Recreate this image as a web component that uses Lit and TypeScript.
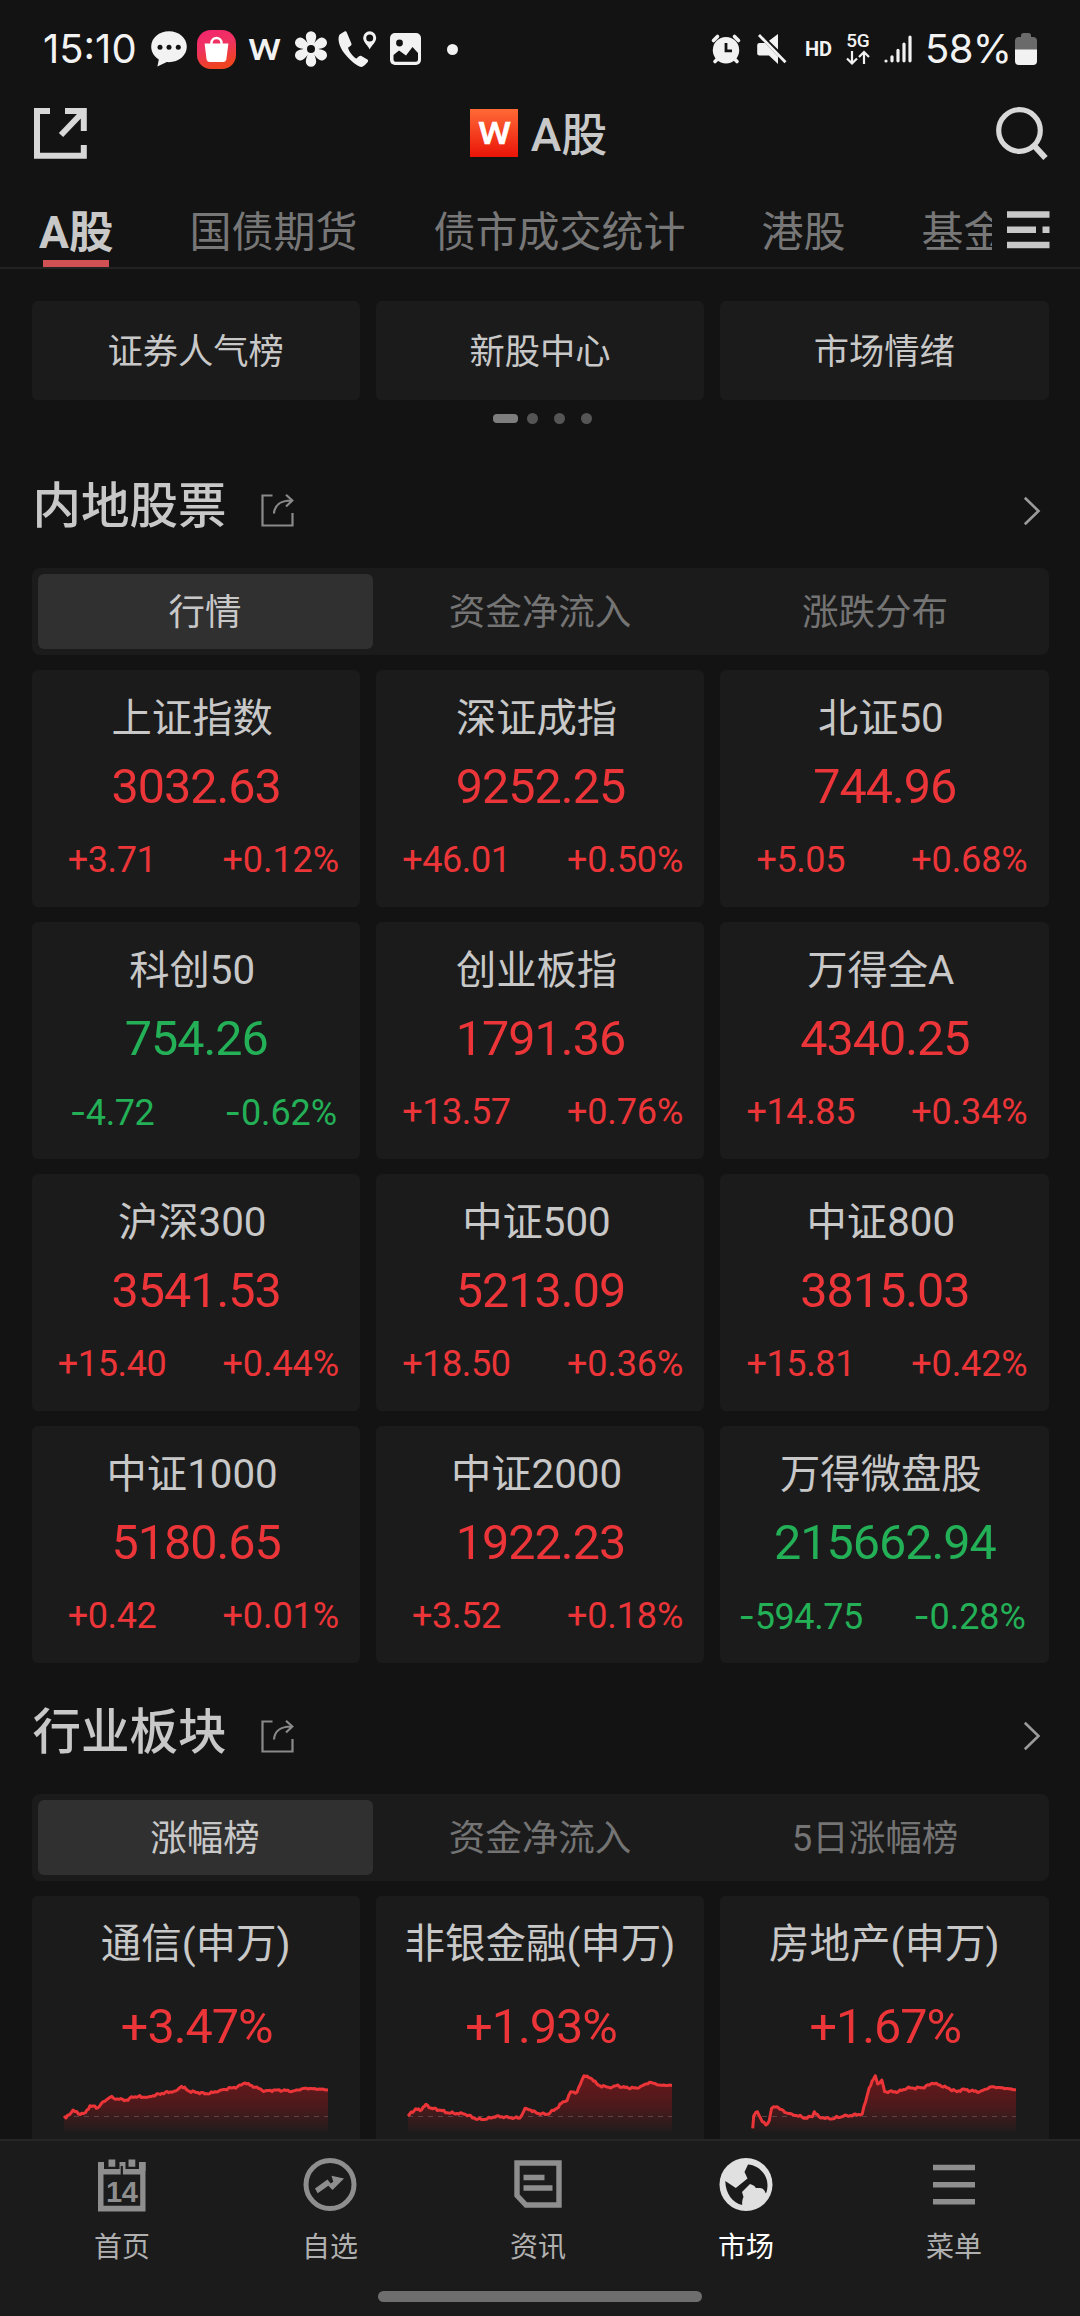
import { LitElement, html, svg, css } from "lit";
import { customElement, property } from "lit/decorators.js";
import { classMap } from "lit/directives/class-map.js";

type Quote = { name: string; price: string; diff: string; pct: string };
type Point = [number, number];
type Sector = { name: string; pct: string; points: Point[] };

const QUOTES: Quote[] = [
  { name: "上证指数", price: "3032.63", diff: "+3.71", pct: "+0.12%" },
  { name: "深证成指", price: "9252.25", diff: "+46.01", pct: "+0.50%" },
  { name: "北证50", price: "744.96", diff: "+5.05", pct: "+0.68%" },
  { name: "科创50", price: "754.26", diff: "-4.72", pct: "-0.62%" },
  { name: "创业板指", price: "1791.36", diff: "+13.57", pct: "+0.76%" },
  { name: "万得全A", price: "4340.25", diff: "+14.85", pct: "+0.34%" },
  { name: "沪深300", price: "3541.53", diff: "+15.40", pct: "+0.44%" },
  { name: "中证500", price: "5213.09", diff: "+18.50", pct: "+0.36%" },
  { name: "中证800", price: "3815.03", diff: "+15.81", pct: "+0.42%" },
  { name: "中证1000", price: "5180.65", diff: "+0.42", pct: "+0.01%" },
  { name: "中证2000", price: "1922.23", diff: "+3.52", pct: "+0.18%" },
  { name: "万得微盘股", price: "215662.94", diff: "-594.75", pct: "-0.28%" },
];

const SECTORS: Sector[] = [
  {
    name: "通信(申万)",
    pct: "+3.47%",
    points: [
      [0, 44], [2, 46], [9, 38], [14.5, 42], [21.4, 40.7], [26, 33.7], [34, 35.7], [39, 29.7],
      [46, 25.3], [55, 27.3], [64, 28.3], [67.5, 24.7], [84, 25], [98, 21.3], [111.6, 19],
      [117.5, 14.3], [125.4, 19.3], [144, 22], [156, 18.3], [173.6, 14.7], [181, 11], [191, 15.3],
      [201, 19], [211.5, 18], [229, 19], [241, 16.3], [264, 17.7],
    ],
  },
  {
    name: "非银金融(申万)",
    pct: "+1.93%",
    points: [
      [0, 44], [7.7, 36.7], [12, 38.7], [18, 32.3], [22.7, 36], [32.7, 38.3], [39, 40.7], [56, 42],
      [66, 45.7], [68, 47.3], [79, 47], [88.7, 44], [101, 45.7], [112, 46], [117, 36.3],
      [122.7, 38], [129, 41.3], [139, 42.3], [149, 36.3], [155, 29.7], [159, 28.7], [162.7, 19.7],
      [169, 20.3], [172, 13], [176, 3.7], [184, 7], [190, 13], [202.7, 16], [210, 13],
      [214, 15.3], [229, 16.3], [241.7, 10.3], [252.7, 13.3], [264, 13.3],
    ],
  },
  {
    name: "房地产(申万)",
    pct: "+1.67%",
    points: [
      [0.7, 56.3], [1.7, 44], [5.5, 39.7], [10.3, 49.7], [13.8, 53], [17.2, 48.7], [19.6, 36.3],
      [25, 34.7], [32.7, 40.3], [39.6, 42], [53.4, 46], [60.3, 44.7], [62.3, 39.7], [67, 44.7],
      [77.5, 47], [91.3, 44.3], [110.2, 42], [113.6, 29.7], [117, 16.3], [123.3, 3.7],
      [125.7, 12], [129.8, 8], [132.6, 19.7], [146.3, 19.7], [155, 16.3], [170.5, 15.7],
      [180.8, 11.3], [187.7, 13], [205, 19.7], [210, 17.3], [227.3, 20], [239.3, 14.7], [264, 17.7],
    ],
  },
];

/* Subdivides the trend and adds the small tick-to-tick wobble of intraday data. */
function intraday(points: Point[]): Point[] {
  const out: Point[] = [];
  let k = 0;
  for (let i = 0; i < points.length - 1; i++) {
    const [x0, y0] = points[i];
    const [x1, y1] = points[i + 1];
    const steps = Math.max(1, Math.round((x1 - x0) / 1.7));
    for (let s = 0; s < steps; s++) {
      const t = s / steps;
      const fade = x0 > 215 ? 0.4 : 1;
      const wobble = s === 0 ? 0 : (Math.sin(k * 2.4) + Math.sin(k * 5.1)) * 0.65 * fade;
      out.push([x0 + (x1 - x0) * t, y0 + (y1 - y0) * t + wobble]);
      k++;
    }
  }
  out.push(points[points.length - 1]);
  return out;
}

const FONT = css`
  font-family: Roboto, "Noto Sans CJK SC", sans-serif;
`;

@customElement("status-bar")
class StatusBar extends LitElement {
  static styles = css`
    :host {
      display: flex;
      justify-content: space-between;
      height: 90px;
      padding: 28px 43px 20px 43px;
      box-sizing: border-box;
      color: #f2f2f2;
    }
    .side { display: flex; align-items: center; height: 42px; }
    .clock, .battery-text { font: 400 40px/42px Inter, sans-serif; }
    .clock { width: 95px; letter-spacing: 0; margin-right: 13px; white-space: nowrap; }
    .battery-text { width: 90px; letter-spacing: -0.6px; margin-left: 13px; white-space: nowrap; }
    svg { display: block; flex: none; overflow: visible; }
    .bag { margin-left: 10px; }
    .wind { margin-left: 12px; }
    .flower { margin-left: 13px; }
    .call { margin-left: 10px; }
    .photo { margin-left: 13px; }
    .more { margin-left: 26px; }
    .mute { margin-left: 16px; }
    .hd { font: 700 20px/24px Roboto, sans-serif; margin-left: 18px; width: 27px; }
    .net { margin-left: 14px; }
    .bars { margin-left: 14px; }
  `;
  render() {
    return html`
      <div class="side">
        <span class="clock">15:10</span>
        <svg width="36" height="36" viewBox="0 0 36 36">
          <path fill="#f2f2f2" d="M18 .3C8 .3.2 7 .2 15.6c0 5.6 3 10 7.6 12.8L6.4 35.6l9.4-4.5c11 1 20-6 20-15.5C35.800 7 28 .3 18 .3Z"/>
          <g fill="#131313"><circle cx="9" cy="16.300" r="2.500"/><circle cx="18" cy="16.300" r="2.500"/><circle cx="27.300" cy="16.300" r="2.500"/></g>
        </svg>
        <svg class="bag" width="39" height="39" viewBox="0 0 39 39">
          <defs><linearGradient id="bag" x1="0" y1="0" x2=".3" y2="1"><stop offset="0" stop-color="#f5246f"/><stop offset=".5" stop-color="#ee3360"/><stop offset="1" stop-color="#f04321"/></linearGradient></defs>
          <rect width="39" height="39" rx="14" fill="url(#bag)"/>
          <path d="M14.500 15v-2a5 5 0 0 1 10 0v2" fill="none" stroke="#fff" stroke-width="2.400"/>
          <path d="M7.600 13.600h23.800l-2 15.400a3.500 3.500 0 0 1-3.500 3H13a3.500 3.500 0 0 1-3.500-3Z" fill="#fff"/>
        </svg>
        <svg class="wind" width="33" height="24" viewBox="0 0 33 24">
          <text x="0" y="23" font-family="Roboto" font-weight="500" font-size="30" fill="#f2f2f2" textLength="33" lengthAdjust="spacingAndGlyphs">W</text>
        </svg>
        <svg class="flower" width="34" height="36" viewBox="-17 -18 34 36">
          ${[0, 60, 120, 180, 240, 300].map(
            (a) => svg`<path transform="rotate(${a})" fill="#f2f2f2" d="M-2.500-2C-3-6-5.200-9-5.200-12.500a5.200 5.200 0 0 1 10.400 0C5.200-9 3-6 2.500-2Z"/>`,
          )}
          <circle r="4.800" fill="#f2f2f2"/><circle r="4" fill="#131313"/>
        </svg>
        <svg class="call" width="39" height="36" viewBox="0 0 39 36">
          <path fill="#f2f2f2" d="M6.500.4 2 3.200C-1 6 .6 15 6.500 22.500 12.500 30 20 35.500 23 36c2 .2 5-2.600 6.800-5.200.6-1 .4-1.800-.4-2.400l-6-3.400c-.9-.5-1.700-.3-2.400.3l-2.600 2.300c-3.200-1.500-7.400-7-8.400-10.900l2.700-2c.8-.6 1-1.400.7-2.300L8.800 1.400C8.400.300 7.500-.2 6.500.4Z"/>
          <path fill="#f2f2f2" fill-rule="evenodd" d="M31.700.3a6.500 6.500 0 0 1 6.500 6.500c0 4.500-5 8-6.500 11.700C30.200 14.800 25.200 11.300 25.200 6.800A6.500 6.500 0 0 1 31.700.3Zm0 3.200a3.500 3.500 0 1 0 0 7 3.500 3.500 0 0 0 0-7Z"/>
        </svg>
        <svg class="photo" width="31" height="32" viewBox="0 0 31 32">
          <rect width="31" height="32" rx="5" fill="#f2f2f2"/>
          <circle cx="9.500" cy="10" r="3.400" fill="#131313"/>
          <path fill="#131313" d="m3.500 22 5.500-4.500 7 5L22.500 14l5.500 6v6.500a2.200 2.200 0 0 1-2.200 2.200H5.700a2.200 2.200 0 0 1-2.200-2.200Z"/>
        </svg>
        <svg class="more" width="11" height="11" viewBox="0 0 11 11"><circle cx="5.500" cy="5.500" r="5.500" fill="#f2f2f2"/></svg>
      </div>
      <div class="side">
        <svg width="30" height="30" viewBox="0 0 30 30">
          <g stroke="#f2f2f2" stroke-width="3.600" stroke-linecap="round"><path d="m2.500 6.500 4-4M27.500 6.500l-4-4"/><path d="m4 27.500 3-3M26 27.500l-3-3"/></g>
          <circle cx="15" cy="16.200" r="13.200" fill="#f2f2f2"/>
          <path d="M15 9v7.800h6" fill="none" stroke="#131313" stroke-width="2.800"/>
        </svg>
        <svg class="mute" width="30" height="30" viewBox="0 0 30 30">
          <path fill="#f2f2f2" d="M2.500 9H8l13 13.500V30l-9-8.500H2.500A2.300 2.300 0 0 1 .2 19v-7.700A2.300 2.300 0 0 1 2.500 9ZM21 0v15.500L12 6.800Z"/>
          <path d="M2 1 28.500 28.200" stroke="#f2f2f2" stroke-width="2.800"/>
        </svg>
        <span class="hd">HD</span>
        <svg class="net" width="24" height="34" viewBox="0 0 24 34">
          <text x="0.300" y="15" font-family="Roboto" font-weight="500" font-size="19" fill="#f2f2f2" textLength="23.500">5G</text>
          <path d="M6 19v12M1 26.500l5 5 5-5M18 32V20M13 25l5-5 5 5" fill="none" stroke="#f2f2f2" stroke-width="2.200"/>
        </svg>
        <svg class="bars" width="28" height="28" viewBox="0 0 28 28">
          <g stroke="#f2f2f2" stroke-width="3.200" stroke-linecap="round"><path d="M2 26h.010M8 25.800v-4M14 25.800v-10.500M20 25.800V9M26 25.800V2"/></g>
        </svg>
        <span class="battery-text">58%</span>
        <svg width="22" height="32" viewBox="0 0 22 32">
          <path fill="#6a6a6a" d="M6 2.500A2.500 2.500 0 0 1 8.500 0h5A2.500 2.500 0 0 1 16 2.500V4h2a4 4 0 0 1 4 4v9H0V8a4 4 0 0 1 4-4h2Z"/>
          <path fill="#f2f2f2" d="M0 16.500h22V28a4 4 0 0 1-4 4H4a4 4 0 0 1-4-4Z"/>
        </svg>
      </div>
    `;
  }
}

@customElement("market-header")
class MarketHeader extends LitElement {
  static styles = css`
    :host {
      display: block;
      height: 179px;
      border-bottom: 2px solid #232323;
      box-sizing: border-box;
      color: #c8c8c8;
      ${FONT}
    }
    .bar { display: flex; align-items: center; height: 88px; padding: 0 32px 2px 34px; box-sizing: border-box; justify-content: space-between; }
    .brand { display: flex; align-items: center; gap: 13px; margin-right: 6px; font: 500 46px/60px Roboto, "Noto Sans CJK SC", sans-serif; }
    .brand span { padding-top: 3px; }
    svg { display: block; flex: none; }
    .tabs { display: flex; height: 89px; padding-left: 39px; padding-right: 30px; }
    .list { display: flex; gap: 76px; width: 954px; overflow: hidden; }
    .tab { flex: none; font-size: 42px; line-height: 60px; padding-top: 25px; color: #777; white-space: nowrap; display: flex; flex-direction: column; align-items: center; }
    .tab.on { color: #c8c8c8; font-weight: 700; font-size: 44.5px; }
    .tab.on::after { content: ""; width: 66px; height: 7px; margin-top: -3px; background: #d05054; }
    .menu { margin: 33px 0 0 15px; }
  `;
  render() {
    const tabs = ["A股", "国债期货", "债市成交统计", "港股", "基金"];
    return html`
      <div class="bar">
        <svg width="53" height="51" viewBox="0 0 53 51">
          <path d="M16 3H3v44.800h46.800V37" fill="none" stroke="#d8d8d8" stroke-width="6"/>
          <path d="M31 3h18.800v20M48 5 27 27" fill="none" stroke="#d8d8d8" stroke-width="6"/>
        </svg>
        <div class="brand">
          <svg width="48" height="48" viewBox="0 0 48 48">
            <defs><linearGradient id="logo" x1="0" y1="0" x2="0" y2="1"><stop offset="0" stop-color="#ff6a36"/><stop offset="1" stop-color="#ea1408"/></linearGradient></defs>
            <rect width="48" height="48" fill="url(#logo)"/>
            <text x="8" y="34.500" font-family="Roboto" font-weight="500" font-size="30.500" stroke="#fff" stroke-width=".5" fill="#fff" textLength="33" lengthAdjust="spacingAndGlyphs">W</text>
          </svg>
          <span>A股</span>
        </div>
        <svg width="52" height="53" viewBox="0 0 52 53">
          <circle cx="23.500" cy="23.500" r="20.800" fill="none" stroke="#d8d8d8" stroke-width="5.200"/>
          <path d="m37.500 38 12 13" stroke="#d8d8d8" stroke-width="6"/>
        </svg>
      </div>
      <div class="tabs">
        <div class="list">
          ${tabs.map((t, i) => html`<div class=${classMap({ tab: true, on: i === 0 })}>${t}</div>`)}
        </div>
        <svg class="menu" width="43" height="38" viewBox="0 0 43 38">
          <path d="M0 3.500h42.500M0 18.800h29M35.500 18.800h7M0 34h42.500" stroke="#c8c8c8" stroke-width="6.600"/>
        </svg>
      </div>
    `;
  }
}

@customElement("section-title")
class SectionTitle extends LitElement {
  @property() label = "";
  static styles = css`
    :host { display: flex; align-items: center; height: 64px; padding: 0 9px 0 1px; ${FONT} }
    .label { width: 228px; font-size: 48.5px; line-height: 64px; padding-top: 4px; font-weight: 500; color: #c8c8c8; white-space: nowrap; }
    svg { display: block; overflow: visible; margin-top: 11px; }
    .go { margin-left: auto; }
  `;
  render() {
    return html`
      <span class="label">${this.label}</span>
      <svg width="33" height="33" viewBox="0 0 33 33" fill="none" stroke="#8a8a8a" stroke-width="2.200">
        <path d="M11.500 1.500h-10v30h30V19"/>
        <path d="M13 19.500C13.500 11 20 6.500 30 6.500M25 .8l6.300 5.700L25 12.500"/>
      </svg>
      <svg class="go" width="16" height="28" viewBox="0 0 16 28" fill="none" stroke="#9a9a9a" stroke-width="2.600"><path d="M.8.8 14.500 14 .8 27.200"/></svg>
    `;
  }
}

@customElement("segment-bar")
class SegmentBar extends LitElement {
  @property({ attribute: false }) items: string[] = [];
  static styles = css`
    :host { display: grid; grid-template-columns: repeat(3, 1fr); height: 87px; padding: 6px; box-sizing: border-box; border-radius: 8px; background: #1b1b1b; ${FONT} }
    .seg { display: flex; align-items: center; justify-content: center; padding-top: 3px; font-size: 36.5px; line-height: 50px; color: #747474; border-radius: 6px; }
    .seg.on { color: #c8c8c8; background: #303030; }
  `;
  render() {
    return this.items.map((t, i) => html`<div class=${classMap({ seg: true, on: i === 0 })}>${t}</div>`);
  }
}

@customElement("quote-card")
class QuoteCard extends LitElement {
  @property({ attribute: false }) quote!: Quote;
  static styles = css`
    :host { display: block; height: 236.500px; padding-top: 25px; box-sizing: border-box; border-radius: 6px; background: #1b1b1b; text-align: center; white-space: nowrap; ${FONT} }
    .name { font-size: 40.300px; line-height: 48px; color: #c8c8c8; padding-right: 7px; }
    .price { font-size: 48.500px; line-height: 56px; margin-top: 16px; letter-spacing: -1px; padding-left: 1px; }
    .row { display: grid; grid-template-columns: 1fr 1fr; gap: 12px; margin-top: 25px; font-size: 36px; line-height: 40px; letter-spacing: -0.1px; }
    .diff { padding-left: 3px; letter-spacing: -0.4px; }
    .minus { font-family: Inter, sans-serif; }
    .up { color: #ec3538; }
    .down { color: #23b057; }
  `;
  private signed(s: string) {
    return s.startsWith("-") ? html`<span class="minus">-</span>${s.slice(1)}` : s;
  }
  render() {
    const q = this.quote;
    const down = q.diff.startsWith("-");
    return html`
      <div class="name">${q.name}</div>
      <div class=${classMap({ up: !down, down })}>
        <div class="price">${q.price}</div>
        <div class="row"><span class="diff">${this.signed(q.diff)}</span><span>${this.signed(q.pct)}</span></div>
      </div>
    `;
  }
}

@customElement("sector-card")
class SectorCard extends LitElement {
  @property({ attribute: false }) sector!: Sector;
  static styles = css`
    :host { display: block; height: 260px; padding-top: 24px; box-sizing: border-box; border-radius: 6px; background: #1b1b1b; text-align: center; white-space: nowrap; ${FONT} }
    .name { font-size: 40.500px; line-height: 48px; color: #c8c8c8; }
    .pct { font-size: 48.500px; line-height: 56px; margin-top: 31px; letter-spacing: -1px; padding-left: 2px; color: #ec3538; }
    svg { display: block; margin: 17px auto 0; overflow: visible; }
  `;
  render() {
    const pts = intraday(this.sector.points).map(([x, y]) => `${x.toFixed(1)},${y.toFixed(1)}`);
    const line = "M" + pts.join("L");
    return html`
      <div class="name">${this.sector.name}</div>
      <div class="pct">${this.sector.pct}</div>
      <svg width="264" height="60" viewBox="0 0 264 60">
        <defs><linearGradient id="fade" gradientUnits="userSpaceOnUse" x1="0" y1="8" x2="0" y2="60"><stop offset="0" stop-color="#e0141c" stop-opacity=".38"/><stop offset=".5" stop-color="#e0141c" stop-opacity=".25"/><stop offset="1" stop-color="#e0242c" stop-opacity=".03"/></linearGradient></defs>
        <path d="${line}L264,60L0,60Z" fill="url(#fade)"/>
        <path d="M0 44.500h264" stroke="#5c4244" stroke-width="1" stroke-dasharray="5 5"/>
        <path d=${line} fill="none" stroke="#ec3538" stroke-width="3" stroke-linejoin="round"/>
      </svg>
    `;
  }
}

@customElement("bottom-nav")
class BottomNav extends LitElement {
  static styles = css`
    :host { display: flex; flex-direction: column; align-items: center; height: 177px; flex: none; box-sizing: border-box; background: #1b1b1b; border-top: 2px solid #262626; ${FONT} }
    .items { display: grid; grid-template-columns: repeat(5, 208px); width: 1040px; margin-right: 4px; padding-top: 16px; }
    .item { display: flex; flex-direction: column; align-items: center; color: #b0b0b0; font-size: 28px; line-height: 36px; gap: 17px; }
    .item.on { color: #fff; }
    svg { display: block; }
    .home { width: 324px; height: 11px; border-radius: 6px; background: #6e6e6e; margin-top: 25px; }
  `;
  render() {
    const icons = [
      svg`<path fill="#8e8e8e" fill-rule="evenodd" d="M3 5h6v7h15.500V5h6v7H46V5h4.500v49.500H3ZM8.500 17.500v31.300h36.700V17.500Z"/>
        <path fill="#8e8e8e" d="M13.500 2.500h6.800v7.200h-6.800ZM33.500 2.500h6.800v7.200h-6.800ZM44 5h6.500v9H44Z"/>
        <path d="M26.800 9v11" stroke="#1b1b1b" stroke-width="2.200"/>
        <text x="11" y="44.500" font-family="Liberation Sans" font-weight="700" font-size="29" fill="#8e8e8e" textLength="32">14</text>`,
      svg`<circle cx="27" cy="27.500" r="24" fill="none" stroke="#8e8e8e" stroke-width="5"/>
        <path fill="#8e8e8e" d="M12 31.500 24.500 22.500l3.200 4 2.600-1.800-1.800-6L41 21.500 29.500 33l-4.200-4.300L14.700 36.300Z"/>`,
      svg`<path d="M6 6h42v42H15L6 38.500Z" fill="none" stroke="#8e8e8e" stroke-width="5.400"/>
        <path d="M12.500 20.500h21M12.500 31h29" stroke="#8e8e8e" stroke-width="5.400"/>`,
      svg`<circle cx="27" cy="27.500" r="26.500" fill="#e0e0e0"/>
        <path fill="#1b1b1b" d="M29 7.500C39 8 48.500 17 48.500 28c0 4-.6 6.500-1.700 8.500-1.300-3.500-3-5.500-6-5.500h-4c-1-2.500-3-3-5.800-4l-8 8 1.500 5c-1.300 2.500-1.500 5.500-1.300 8C14 46 6.500 37 6.300 24l10.500 7L28.500 21.500 25.500 15Z"/>`,
      svg`<path d="M6 10.500h42M6 27.700h42M6 44.800h42" stroke="#8e8e8e" stroke-width="5.600"/>`,
    ];
    const labels = ["首页", "自选", "资讯", "市场", "菜单"];
    return html`
      <div class="items">
        ${labels.map(
          (l, i) => html`<div class=${classMap({ item: true, on: i === 3 })}>
            <svg width="54" height="56" viewBox="0 0 54 56">${icons[i]}</svg><span>${l}</span>
          </div>`,
        )}
      </div>
      <div class="home"></div>
    `;
  }
}

@customElement("app-root")
class AppRoot extends LitElement {
  static styles = css`
    :host { display: flex; flex-direction: column; width: 1080px; height: 2316px; overflow: hidden; background: #131313; ${FONT} }
    .body { flex: 1; min-height: 0; overflow: hidden; padding: 32px 31.500px 0; }
    .grid { display: grid; grid-template-columns: repeat(3, 1fr); gap: 15.500px 16px; }
    .entry { height: 99px; padding-top: 2px; box-sizing: border-box; display: flex; align-items: center; justify-content: center; font-size: 35.300px; line-height: 50px; color: #c8c8c8; background: #1b1b1b; border-radius: 6px; }
    .dots { display: flex; justify-content: center; align-items: center; gap: 16px; height: 11px; margin: 13px 0 49px 4px; }
    .dot { width: 11px; height: 11px; border-radius: 50%; background: #555; }
    .dot.on { width: 25px; height: 8.500px; border-radius: 4px; background: #7e7e7e; margin-right: -7px; }
    segment-bar { margin: 31px 0 15px; }
    .second { margin-top: 36px; }
  `;
  render() {
    return html`
      <status-bar></status-bar>
      <market-header></market-header>
      <div class="body">
        <div class="grid">
          ${["证券人气榜", "新股中心", "市场情绪"].map((t) => html`<div class="entry">${t}</div>`)}
        </div>
        <div class="dots">${[0, 1, 2, 3].map((i) => html`<span class=${classMap({ dot: true, on: i === 0 })}></span>`)}</div>
        <section-title label="内地股票"></section-title>
        <segment-bar .items=${["行情", "资金净流入", "涨跌分布"]}></segment-bar>
        <div class="grid">${QUOTES.map((q) => html`<quote-card .quote=${q}></quote-card>`)}</div>
        <section-title class="second" label="行业板块"></section-title>
        <segment-bar .items=${["涨幅榜", "资金净流入", "5日涨幅榜"]}></segment-bar>
        <div class="grid">${SECTORS.map((s) => html`<sector-card .sector=${s}></sector-card>`)}</div>
      </div>
      <bottom-nav></bottom-nav>
    `;
  }
}
